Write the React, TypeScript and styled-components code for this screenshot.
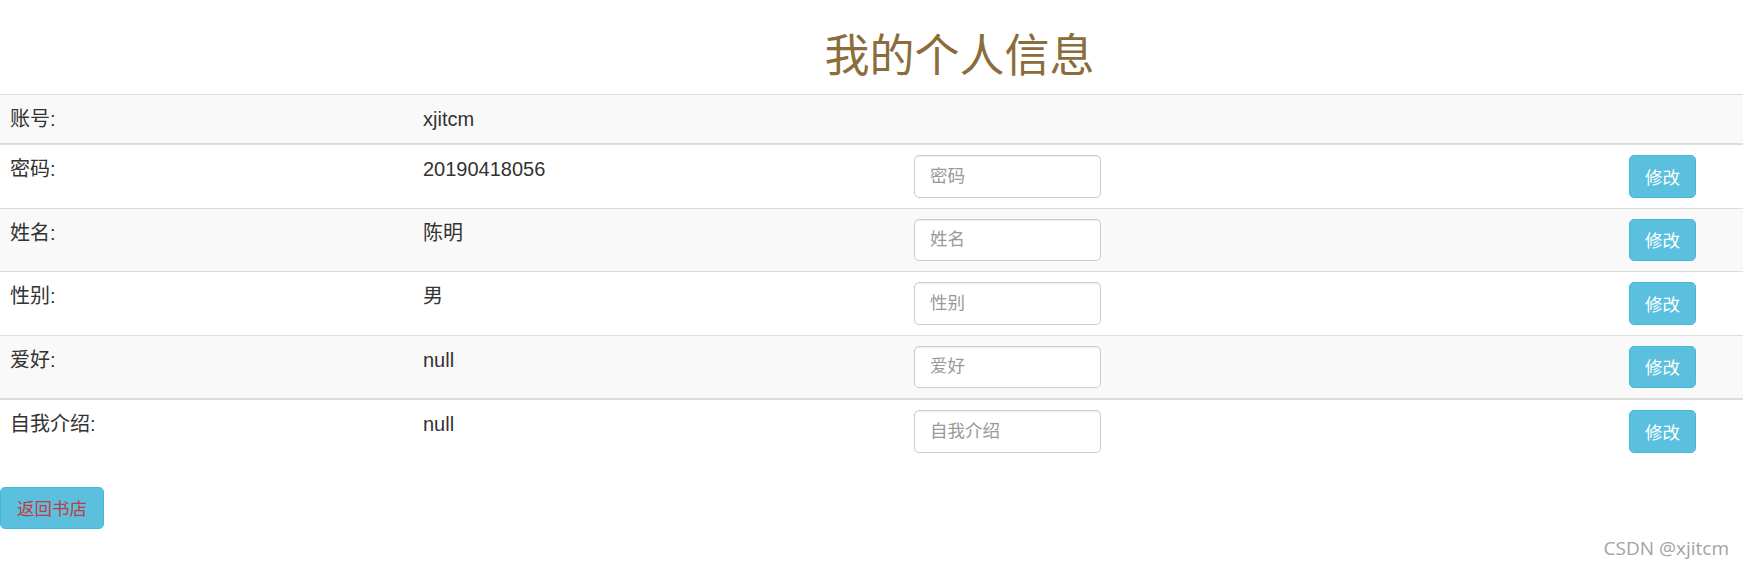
import React from 'react'
import styled, { createGlobalStyle } from 'styled-components'

const GlobalStyle = createGlobalStyle`
  html, body {
    margin: 0;
    padding: 0;
    background: #fff;
  }
  body {
    font-family: 'Liberation Sans', 'Noto Sans CJK SC', sans-serif;
    font-size: 17.5px;
    color: #333;
  }
  * {
    box-sizing: border-box;
  }
`

type Field = {
  label: string
  value: string
  editable: boolean
}

const fields: Field[] = [
  { label: '账号', value: 'xjitcm', editable: false },
  { label: '密码', value: '20190418056', editable: true },
  { label: '姓名', value: '陈明', editable: true },
  { label: '性别', value: '男', editable: true },
  { label: '爱好', value: 'null', editable: true },
  { label: '自我介绍', value: 'null', editable: true },
]

const App = () => {
  return (
    <Page>
      <GlobalStyle />
      <Header>
        <Title>我的个人信息</Title>
      </Header>

      <Table>
        {fields.map((f, i) => (
          <Row
            key={f.label}
            $striped={i % 2 === 0 && i < 5}
            $thick={i === 1 || i === 5}
            $first={i === 0}
          >
            <Cell>{f.label}:</Cell>
            <Cell>{f.value}</Cell>
            <Cell>{f.editable && <Input placeholder={f.label} />}</Cell>
            <Cell>{f.editable && <EditButton>修改</EditButton>}</Cell>
          </Row>
        ))}
      </Table>

      <Footer>
        <BackButton>返回书店</BackButton>
      </Footer>

      <Watermark>CSDN @xjitcm</Watermark>
    </Page>
  )
}

export default App

const Page = styled.div`
  position: relative;
  width: 1743px;
  min-height: 569px;
`

const Header = styled.div`
  padding: 32px 0 0 176px;
  margin-bottom: 12px;
  text-align: center;
`

const Title = styled.h1`
  margin: 0;
  font-size: 45px;
  line-height: 50px;
  font-weight: 400;
  color: #8a6d3b;
`

const Table = styled.div`
  display: flex;
  flex-direction: column;
  font-size: 20px;
`

const Row = styled.div<{ $striped: boolean; $thick: boolean; $first: boolean }>`
  display: grid;
  grid-template-columns: 413px 491px 715px 1fr;
  min-height: ${(p) => (p.$first ? '49px' : '63.5px')};
  background-color: ${(p) => (p.$striped ? '#f9f9f9' : '#fff')};
  border-top: ${(p) => (p.$thick ? '2px' : '1px')} solid #ddd;
`

const Cell = styled.div`
  padding: 10px;
  line-height: 28px;
`

const Input = styled.input`
  display: block;
  width: 187px;
  height: 42.5px;
  padding: 7.5px 15px;
  font-family: inherit;
  font-size: 17.5px;
  color: #555;
  background: #fff;
  border: 1px solid #ccc;
  border-radius: 5px;
  box-shadow: inset 0 1px 1px rgba(0, 0, 0, 0.075);
  outline: none;

  &::placeholder {
    color: #999;
  }
`

const EditButton = styled.button`
  display: block;
  height: 42.5px;
  padding: 0 15px;
  font-family: inherit;
  font-size: 17.5px;
  color: #fff;
  background-color: #5bc0de;
  border: 1px solid #46b8da;
  border-radius: 5px;
  cursor: pointer;
`

const Footer = styled.div`
  padding-top: 24px;
`

const BackButton = styled.button`
  display: block;
  height: 42.5px;
  padding: 0 16px;
  font-family: inherit;
  font-size: 17.5px;
  color: #c23b44;
  background-color: #5bc0de;
  border: 1px solid #46b8da;
  border-radius: 5px;
  cursor: pointer;
`

const Watermark = styled.div`
  position: absolute;
  right: 14px;
  top: 535px;
  font-family: 'Open Sans', sans-serif;
  font-size: 19px;
  color: #a3a3a3;
  text-shadow: 0 0 1px #fff;
`
